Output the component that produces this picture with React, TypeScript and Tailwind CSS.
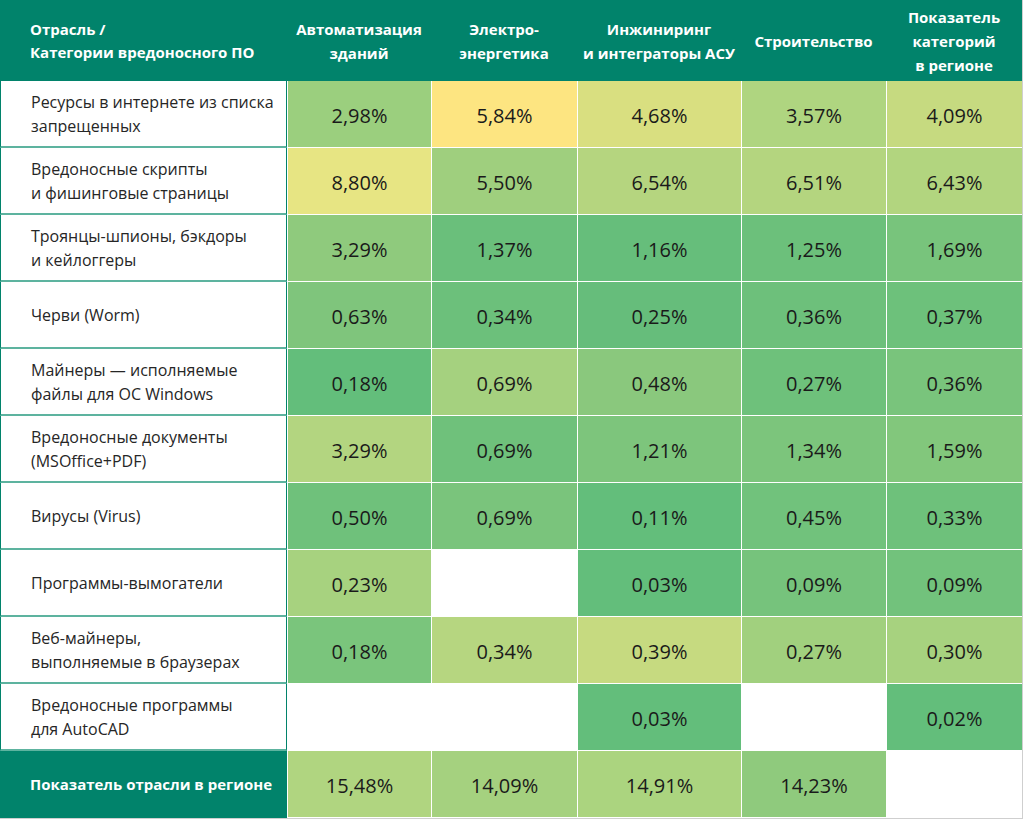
import React from 'react';

type Cell = { v: string; bg: string } | null;

const headers = [
  ['Автоматизация', 'зданий'],
  ['Электро-', 'энергетика'],
  ['Инжиниринг', 'и интеграторы АСУ'],
  ['Строительство'],
  ['Показатель', 'категорий', 'в регионе'],
];

const rows: { label: string[]; cells: Cell[] }[] = [
  {
    label: ['Ресурсы в интернете из списка', 'запрещенных'],
    cells: [
      { v: '2,98%', bg: '#9bcf7e' },
      { v: '5,84%', bg: '#fde581' },
      { v: '4,68%', bg: '#d9df80' },
      { v: '3,57%', bg: '#afd580' },
      { v: '4,09%', bg: '#c6da80' },
    ],
  },
  {
    label: ['Вредоносные скрипты', 'и фишинговые страницы'],
    cells: [
      { v: '8,80%', bg: '#e7e583' },
      { v: '5,50%', bg: '#9fcf7e' },
      { v: '6,54%', bg: '#b5d57f' },
      { v: '6,51%', bg: '#b4d57f' },
      { v: '6,43%', bg: '#b2d57f' },
    ],
  },
  {
    label: ['Троянцы-шпионы, бэкдоры', 'и кейлоггеры'],
    cells: [
      { v: '3,29%', bg: '#8fca7d' },
      { v: '1,37%', bg: '#6abf7b' },
      { v: '1,16%', bg: '#66be7b' },
      { v: '1,25%', bg: '#6cc07b' },
      { v: '1,69%', bg: '#78c47c' },
    ],
  },
  {
    label: ['Черви (Worm)'],
    cells: [
      { v: '0,63%', bg: '#7fc57c' },
      { v: '0,34%', bg: '#6cc07b' },
      { v: '0,25%', bg: '#66bd7b' },
      { v: '0,36%', bg: '#6dc07b' },
      { v: '0,37%', bg: '#6dc17b' },
    ],
  },
  {
    label: ['Майнеры — исполняемые', 'файлы для ОС Windows'],
    cells: [
      { v: '0,18%', bg: '#63be7b' },
      { v: '0,69%', bg: '#a5d17f' },
      { v: '0,48%', bg: '#8ac87d' },
      { v: '0,27%', bg: '#6ec17b' },
      { v: '0,36%', bg: '#79c47c' },
    ],
  },
  {
    label: ['Вредоносные документы', '(MSOffice+PDF)'],
    cells: [
      { v: '3,29%', bg: '#b3d580' },
      { v: '0,69%', bg: '#6fc17b' },
      { v: '1,21%', bg: '#7dc57c' },
      { v: '1,34%', bg: '#7cc57c' },
      { v: '1,59%', bg: '#82c77c' },
    ],
  },
  {
    label: ['Вирусы (Virus)'],
    cells: [
      { v: '0,50%', bg: '#6fc17b' },
      { v: '0,69%', bg: '#7ac47c' },
      { v: '0,11%', bg: '#63be7b' },
      { v: '0,45%', bg: '#71c27c' },
      { v: '0,33%', bg: '#6ec17b' },
    ],
  },
  {
    label: ['Программы-вымогатели'],
    cells: [
      { v: '0,23%', bg: '#a7d27f' },
      null,
      { v: '0,03%', bg: '#63be7b' },
      { v: '0,09%', bg: '#76c37c' },
      { v: '0,09%', bg: '#72c27c' },
    ],
  },
  {
    label: ['Веб-майнеры,', 'выполняемые в браузерах'],
    cells: [
      { v: '0,18%', bg: '#7ac57c' },
      { v: '0,34%', bg: '#b6d680' },
      { v: '0,39%', bg: '#c6da80' },
      { v: '0,27%', bg: '#a1d07e' },
      { v: '0,30%', bg: '#a7d27f' },
    ],
  },
  {
    label: ['Вредоносные программы', 'для AutoCAD'],
    cells: [
      null,
      null,
      { v: '0,03%', bg: '#63be7b' },
      null,
      { v: '0,02%', bg: '#63be7b' },
    ],
  },
];

const totals: Cell[] = [
  { v: '15,48%', bg: '#b0d580' },
  { v: '14,09%', bg: '#a5d17f' },
  { v: '14,91%', bg: '#abd47f' },
  { v: '14,23%', bg: '#8fca7d' },
  null,
];

const ValueCell = ({ cell }: { cell: Cell }) => (
  <div
    className="flex items-center justify-center border-b border-l border-white pt-[3px] text-[20px] text-[#1a1a1a]"
    style={{ backgroundColor: cell ? cell.bg : '#ffffff' }}
  >
    {cell?.v}
  </div>
);

export default function App() {
  return (
    <div className="w-[1024px] h-[820px] bg-white" style={{ fontFamily: '"Open Sans", "Noto Sans", sans-serif' }}>
      <div className="w-[1023px] border-r border-b border-[#cfcfcf]">
        <div className="grid grid-cols-[287px_144px_146px_164px_145px_136px] grid-rows-[81px_repeat(11,67px)]">
          {/* header */}
          <div className="flex flex-col justify-center bg-[#01836b] pl-[30px] text-[15px] font-bold leading-[23px] text-white">
            <span>Отрасль /</span>
            <span>Категории вредоносного ПО</span>
          </div>
          {headers.map((h, i) => (
            <div
              key={i}
              className="flex flex-col items-center justify-center bg-[#01836b] text-center text-[15px] font-bold leading-[24px] text-white"
            >
              {h.map((line) => (
                <span key={line}>{line}</span>
              ))}
            </div>
          ))}

          {/* data rows */}
          {rows.map((row, r) => (
            <React.Fragment key={r}>
              <div className="flex flex-col justify-center border-l border-r border-b-2 border-l-[#01836b] border-r-[#01836b] border-b-[#5db39f] bg-white pl-[30px] text-[16px] leading-[24px] text-[#262626]">
                {row.label.map((line) => (
                  <span key={line}>{line}</span>
                ))}
              </div>
              {row.cells.map((c, i) => (
                <ValueCell key={i} cell={c} />
              ))}
            </React.Fragment>
          ))}

          {/* totals */}
          <div className="flex items-center bg-[#01836b] pl-[30px] text-[15px] font-bold text-white">
            Показатель отрасли в регионе
          </div>
          {totals.map((c, i) => (
            <ValueCell key={i} cell={c} />
          ))}
        </div>
      </div>
    </div>
  );
}
